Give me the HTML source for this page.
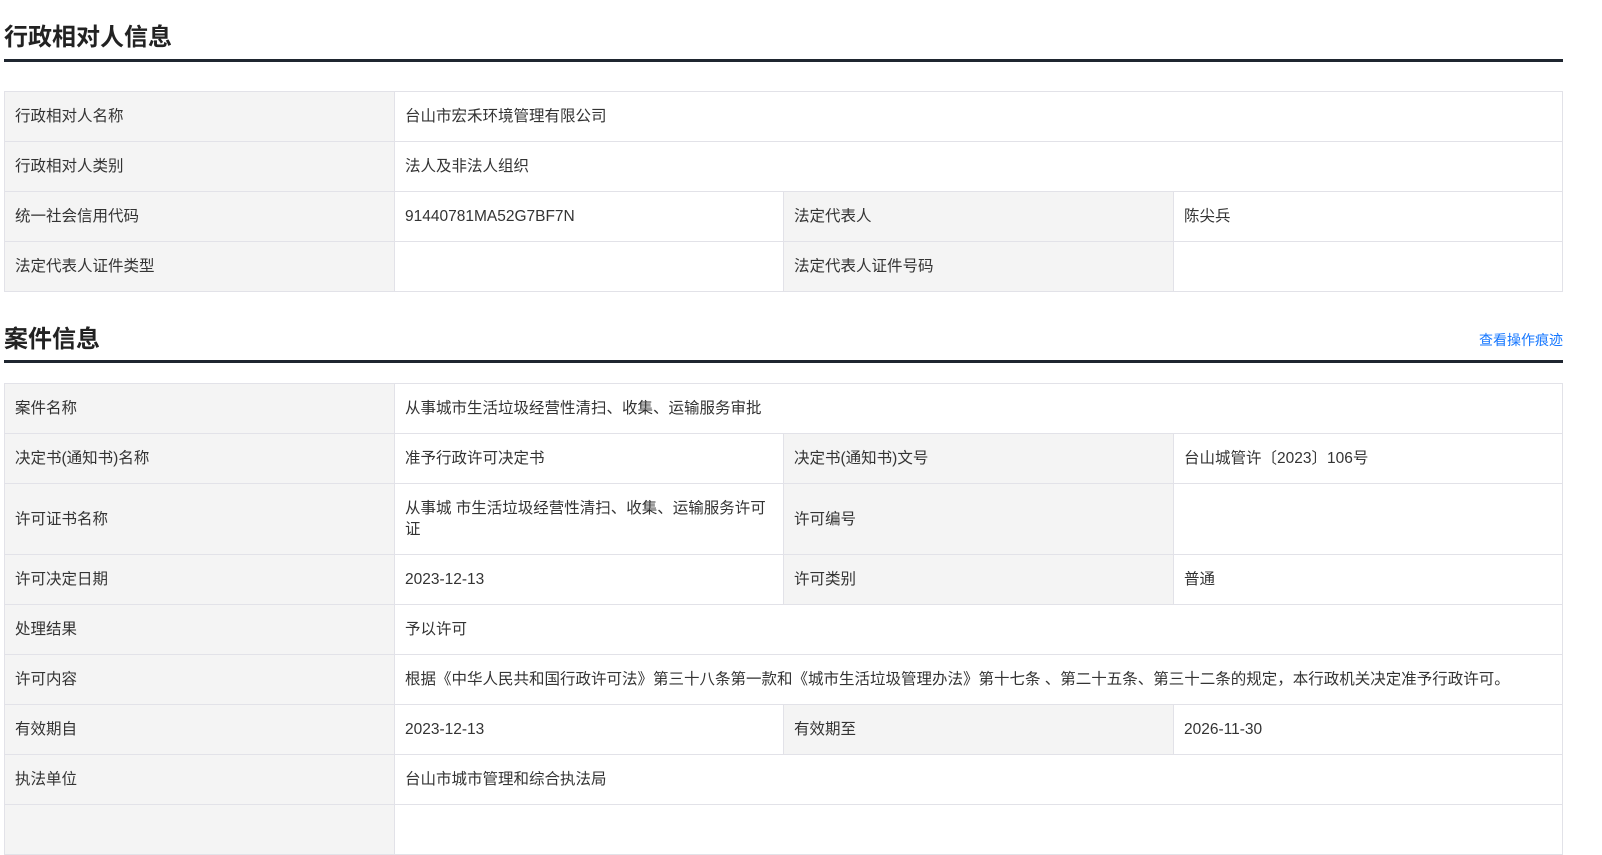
<!DOCTYPE html>
<html><head><meta charset="utf-8"><style>
*{margin:0;padding:0;box-sizing:border-box}
body{width:1602px;height:824px;overflow:hidden;background:#fff;font-family:"Liberation Sans","Noto Sans CJK SC",sans-serif;color:#333;font-size:15.5px}
.h{position:absolute;left:4px;width:1559px;border-bottom:3px solid #1f2630}
.h b{position:absolute;left:0;font-size:24px;font-weight:bold;color:#222}
.h a{position:absolute;right:0;font-size:14px;color:#1677ff;text-decoration:none}
table{position:absolute;left:4px;width:1559px;border-collapse:collapse;table-layout:fixed}
td{border:1px solid #e2e2e8;height:50px;padding:0 8px 0 10px;vertical-align:middle;line-height:21px}
td.l{background:#f4f4f4}
</style></head><body>
<div class="h" style="top:0;height:62px"><b style="top:17px">行政相对人信息</b></div>
<table style="top:91px">
<colgroup><col style="width:390px"><col style="width:389px"><col style="width:390px"><col></colgroup>
<tr><td class="l">行政相对人名称</td><td colspan="3">台山市宏禾环境管理有限公司</td></tr>
<tr><td class="l">行政相对人类别</td><td colspan="3">法人及非法人组织</td></tr>
<tr><td class="l">统一社会信用代码</td><td>91440781MA52G7BF7N</td><td class="l">法定代表人</td><td>陈尖兵</td></tr>
<tr><td class="l">法定代表人证件类型</td><td></td><td class="l">法定代表人证件号码</td><td></td></tr>
</table>
<div class="h" style="top:300px;height:63px"><b style="top:19px">案件信息</b><a style="top:30px">查看操作痕迹</a></div>
<table style="top:383px">
<colgroup><col style="width:390px"><col style="width:389px"><col style="width:390px"><col></colgroup>
<tr><td class="l">案件名称</td><td colspan="3">从事城市生活垃圾经营性清扫、收集、运输服务审批</td></tr>
<tr><td class="l">决定书(通知书)名称</td><td>准予行政许可决定书</td><td class="l">决定书(通知书)文号</td><td>台山城管许〔2023〕106号</td></tr>
<tr><td class="l" style="height:71px">许可证书名称</td><td>从事城 市生活垃圾经营性清扫、收集、运输服务许可<br>证</td><td class="l">许可编号</td><td></td></tr>
<tr><td class="l">许可决定日期</td><td>2023-12-13</td><td class="l">许可类别</td><td>普通</td></tr>
<tr><td class="l">处理结果</td><td colspan="3">予以许可</td></tr>
<tr><td class="l">许可内容</td><td colspan="3" style="white-space:nowrap">根据《中华人民共和国行政许可法》第三十八条第一款和《城市生活垃圾管理办法》第十七条 、第二十五条、第三十二条的规定，本行政机关决定准予行政许可。</td></tr>
<tr><td class="l">有效期自</td><td>2023-12-13</td><td class="l">有效期至</td><td>2026-11-30</td></tr>
<tr><td class="l">执法单位</td><td colspan="3">台山市城市管理和综合执法局</td></tr>
<tr><td class="l"></td><td colspan="3"></td></tr>
</table>
</body></html>
